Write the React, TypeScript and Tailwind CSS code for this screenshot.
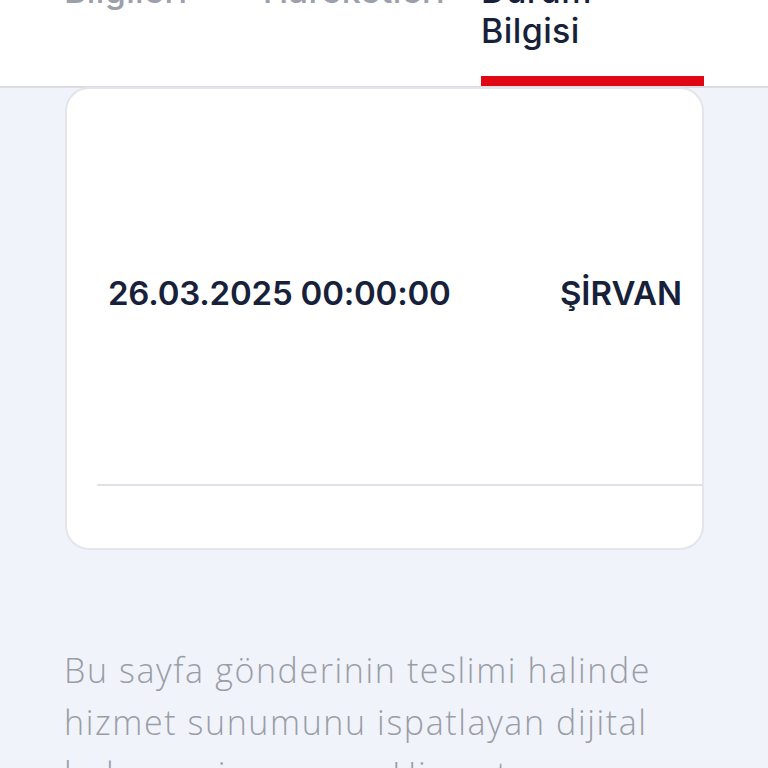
import React from "react";

const sans = { fontFamily: "Inter, 'Noto Sans', sans-serif" };

export default function App() {
  return (
    <div className="w-full min-h-screen bg-[#f0f3fa] overflow-hidden" style={sans}>
      {/* Header tabs */}
      <div className="-mt-[69px] bg-white border-b-2 border-[#dcdde3]">
        <div className="flex pl-[64px]">
          <div className="w-[199px] text-[34px] leading-[40px] tracking-[0.4px] font-medium text-[#9ca0aa]">
            <div>Gönderi</div>
            <div>Bilgileri</div>
          </div>
          <div className="w-[218px] text-[34px] leading-[40px] tracking-[0.4px] font-medium text-[#9ca0aa]">
            <div>Gönderi</div>
            <div>Hareketleri</div>
          </div>
          <div className="w-[223px] flex flex-col text-[34px] leading-[40px] tracking-[0.4px] font-medium text-[#17213a]">
            <div>Teslimat</div>
            <div>Durum</div>
            <div>Bilgisi</div>
            <div className="h-[25px]" />
            <div className="h-[10px] bg-[#e00613]" />
          </div>
        </div>
      </div>

      {/* Card */}
      <div className="ml-[65px] w-[639px] h-[463px] bg-white border-2 border-[#e3e5ea] rounded-[24px] -mt-[1px] flex flex-col pl-[30px] overflow-hidden">
        <div className="h-[395px] flex items-center justify-between pl-[11px] pr-[20px] pt-[14px] text-[#17213a] font-semibold text-[33px]">
          <span className="tracking-[-0.2px]">26.03.2025 00:00:00</span>
          <span>ŞİRVAN</span>
        </div>
        <div className="h-[2px] bg-[#e0e1e6]" />
      </div>

      {/* Info text */}
      <div
        className="pl-[64px] pt-[94px] text-[34px] leading-[52px] font-light tracking-[1.6px] text-[#9a9da6] whitespace-nowrap"
        style={{ fontFamily: "'Open Sans', 'Noto Sans', sans-serif" }}
      >
        <div>Bu sayfa gönderinin teslimi halinde</div>
        <div>hizmet sunumunu ispatlayan dijital</div>
        <div>belge yerine geçer. Hizmet sunumuna</div>
      </div>
    </div>
  );
}
